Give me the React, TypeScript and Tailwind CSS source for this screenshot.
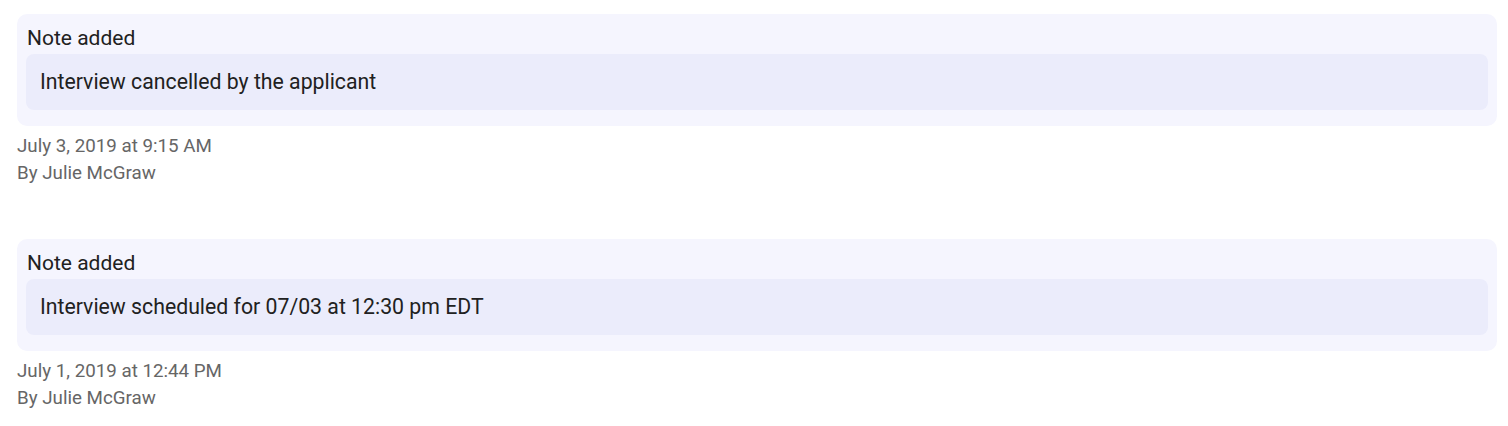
const notes = [
  { text: 'Interview cancelled by the applicant', date: 'July 3, 2019 at 9:15 AM', by: 'By Julie McGraw' },
  { text: 'Interview scheduled for 07/03 at 12:30 pm EDT', date: 'July 1, 2019 at 12:44 PM', by: 'By Julie McGraw' },
]

const App = () => {
  return (
    <div className="w-screen min-h-screen bg-white pl-[17px] pr-[11px] pt-[14px] flex flex-col gap-[52px]" style={{ fontFamily: 'Roboto, "Liberation Sans", sans-serif' }}>
      {notes.map((n, i) => (
        <div key={i}>
          <div className="rounded-[10px] bg-[#f5f5fe] px-[9px] pt-3 pb-4">
            <h3 className="text-[21px] leading-[24px] text-[#212121] pl-px mb-1">Note added</h3>
            <div className="rounded-lg bg-[#ebecfb] px-[14px] py-4 text-[21.25px] leading-[24px] text-[#212121]">{n.text}</div>
          </div>
          <div className="mt-[7px] text-[18.75px] leading-[27px] text-[#666666]">
            <p>{n.date}</p>
            <p>{n.by}</p>
          </div>
        </div>
      ))}
    </div>
  )
}

export default App
